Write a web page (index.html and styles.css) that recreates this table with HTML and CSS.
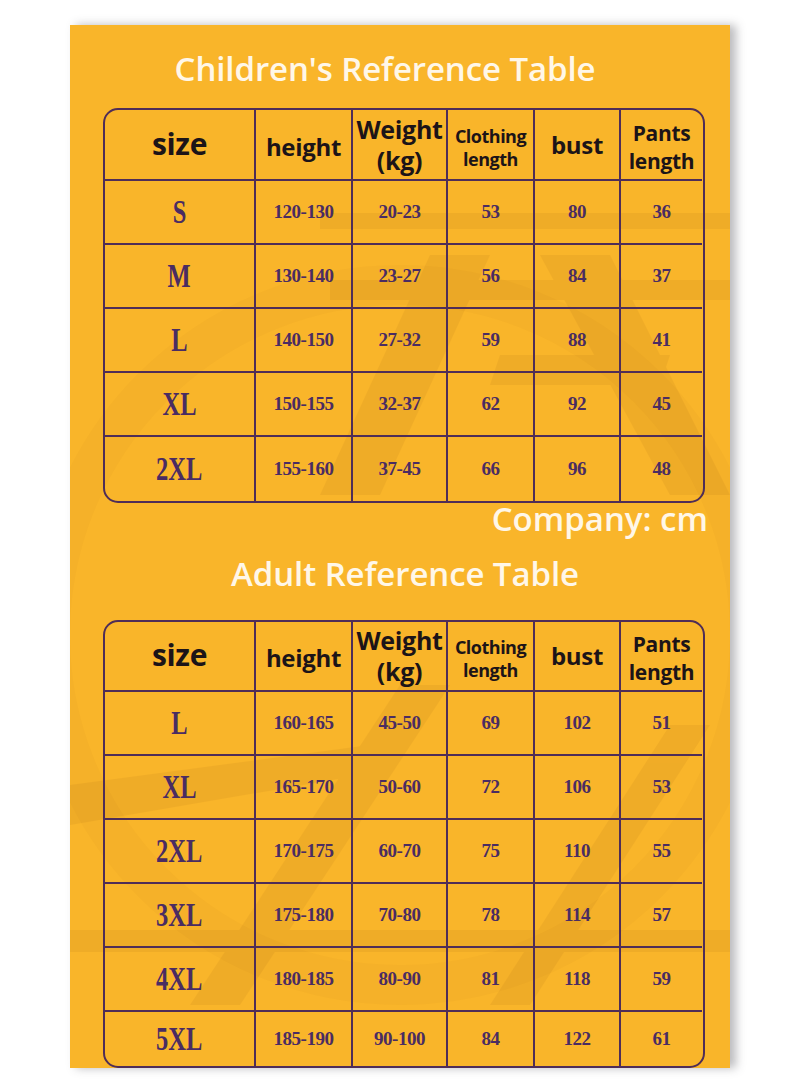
FILE: index.html
```
<!DOCTYPE html>
<html>
<head>
<meta charset="utf-8">
<link rel="stylesheet" href="styles.css">
</head>
<body>
<div class="panel">
  <svg class="watermark" width="660" height="1043" viewBox="0 0 660 1043">
    <g fill="#8a4a10" opacity="0.08">
      <rect x="250" y="188" width="420" height="16"/>
      <rect x="260" y="255" width="410" height="20"/>
      <polygon points="250,470 360,230 420,230 310,470"/>
      <polygon points="470,230 540,230 660,470 600,470"/>
      <polygon points="430,330 600,330 590,360 420,360"/>
      <rect x="0" y="905" width="660" height="22"/>
      <polygon points="0,760 300,720 320,745 0,800"/>
      <polygon points="120,980 330,660 380,660 170,980"/>
      <polygon points="420,980 600,700 640,700 460,980"/>
    </g>
    <circle cx="330" cy="610" r="350" fill="none" stroke="#8a4a10" stroke-width="40" opacity="0.035"/>
  </svg>

  <h1 class="title">Children's Reference Table</h1>
  <div class="table kids">
    <div class="cell head h-size">size</div>
    <div class="cell head h-height">height</div>
    <div class="cell head h-weight">Weight<br>(kg)</div>
    <div class="cell head h-cloth">Clothing<br>length</div>
    <div class="cell head h-bust">bust</div>
    <div class="cell head h-pants">Pants<br>length</div>

    <div class="cell sz"><span>S</span></div><div class="cell num">120-130</div><div class="cell num">20-23</div><div class="cell num">53</div><div class="cell num">80</div><div class="cell num">36</div>
    <div class="cell sz"><span>M</span></div><div class="cell num">130-140</div><div class="cell num">23-27</div><div class="cell num">56</div><div class="cell num">84</div><div class="cell num">37</div>
    <div class="cell sz"><span>L</span></div><div class="cell num">140-150</div><div class="cell num">27-32</div><div class="cell num">59</div><div class="cell num">88</div><div class="cell num">41</div>
    <div class="cell sz"><span>XL</span></div><div class="cell num">150-155</div><div class="cell num">32-37</div><div class="cell num">62</div><div class="cell num">92</div><div class="cell num">45</div>
    <div class="cell sz last"><span>2XL</span></div><div class="cell num last">155-160</div><div class="cell num last">37-45</div><div class="cell num last">66</div><div class="cell num last">96</div><div class="cell num last">48</div>
  </div>

  <div class="unit">Company: cm</div>

  <h1 class="title adult-title">Adult Reference Table</h1>
  <div class="table adult">
    <div class="cell head h-size">size</div>
    <div class="cell head h-height">height</div>
    <div class="cell head h-weight">Weight<br>(kg)</div>
    <div class="cell head h-cloth">Clothing<br>length</div>
    <div class="cell head h-bust">bust</div>
    <div class="cell head h-pants">Pants<br>length</div>

    <div class="cell sz"><span>L</span></div><div class="cell num">160-165</div><div class="cell num">45-50</div><div class="cell num">69</div><div class="cell num">102</div><div class="cell num">51</div>
    <div class="cell sz"><span>XL</span></div><div class="cell num">165-170</div><div class="cell num">50-60</div><div class="cell num">72</div><div class="cell num">106</div><div class="cell num">53</div>
    <div class="cell sz"><span>2XL</span></div><div class="cell num">170-175</div><div class="cell num">60-70</div><div class="cell num">75</div><div class="cell num">110</div><div class="cell num">55</div>
    <div class="cell sz"><span>3XL</span></div><div class="cell num">175-180</div><div class="cell num">70-80</div><div class="cell num">78</div><div class="cell num">114</div><div class="cell num">57</div>
    <div class="cell sz"><span>4XL</span></div><div class="cell num">180-185</div><div class="cell num">80-90</div><div class="cell num">81</div><div class="cell num">118</div><div class="cell num">59</div>
    <div class="cell sz last"><span>5XL</span></div><div class="cell num last">185-190</div><div class="cell num last">90-100</div><div class="cell num last">84</div><div class="cell num last">122</div><div class="cell num last">61</div>
  </div>
</div>
</body>
</html>
```
FILE: styles.css
```
html, body {
  margin: 0;
  padding: 0;
  background: #ffffff;
}
body {
  width: 800px;
  height: 1091px;
  overflow: hidden;
}
.panel {
  position: relative;
  margin: 25px 0 0 70px;
  width: 660px;
  height: 1043px;
  background: #f9b52a;
  overflow: hidden;
  box-shadow: 6px 0 9px rgba(60, 60, 70, 0.35);
  display: flex;
  flex-direction: column;
  align-items: flex-start;
}
.watermark {
  position: absolute;
  left: 0;
  top: 0;
}
.title {
  position: relative;
  margin: 24px 0 0 0;
  width: 630px;
  text-align: center;
  font-family: "Open Sans", "Noto Sans", sans-serif;
  font-weight: 600;
  font-size: 33px;
  line-height: 40px;
  color: #fff7e8;
  letter-spacing: -0.1px;
}
.adult-title {
  margin-top: 19px;
  width: 670px;
}
.table {
  position: relative;
  margin: 19px 0 0 33px;
  width: 602px;
  box-sizing: border-box;
  border: 2.5px solid #4f2d57;
  border-radius: 15px;
  overflow: hidden;
  display: grid;
  grid-template-columns: 151px 97px 95px 87px 86px 81px;
  grid-template-rows: 71px repeat(5, 64px);
}
.table.adult {
  margin-top: 26px;
  grid-template-rows: 70px repeat(5, 64px) 55px;
}
.cell {
  box-sizing: border-box;
  border-right: 2px solid #4f2d57;
  border-bottom: 2px solid #4f2d57;
  display: flex;
  align-items: center;
  justify-content: center;
  text-align: center;
}
.cell:nth-child(6n) {
  border-right: none;
}
.cell.last {
  border-bottom: none;
}
.head {
  font-family: "Open Sans", "Noto Sans", sans-serif;
  font-weight: 700;
  color: #1c1418;
  letter-spacing: -0.3px;
}
.h-size { font-size: 30px; padding-bottom: 2px; }
.h-height { font-size: 24px; padding-top: 4px; }
.h-weight { font-size: 25px; line-height: 31px; }
.h-cloth { font-size: 18px; line-height: 23px; padding-top: 6px; letter-spacing: -0.5px; }
.h-bust { font-size: 24px; }
.h-pants { font-size: 21px; line-height: 28px; padding-top: 4px; }
.sz span {
  display: inline-block;
  font-family: "Liberation Serif", "Times New Roman", serif;
  font-weight: 700;
  font-size: 34px;
  color: #4a2c62;
  transform: scaleX(0.72);
}
.num {
  font-family: "Liberation Serif", "Times New Roman", serif;
  font-weight: 700;
  font-size: 19px;
  color: #4a2c62;
  letter-spacing: -0.5px;
}
.unit {
  position: relative;
  align-self: flex-end;
  margin: 0 22px 0 0;
  font-family: "Open Sans", "Noto Sans", sans-serif;
  font-weight: 600;
  font-size: 33px;
  line-height: 32px;
  color: #fff7e8;
}
```
